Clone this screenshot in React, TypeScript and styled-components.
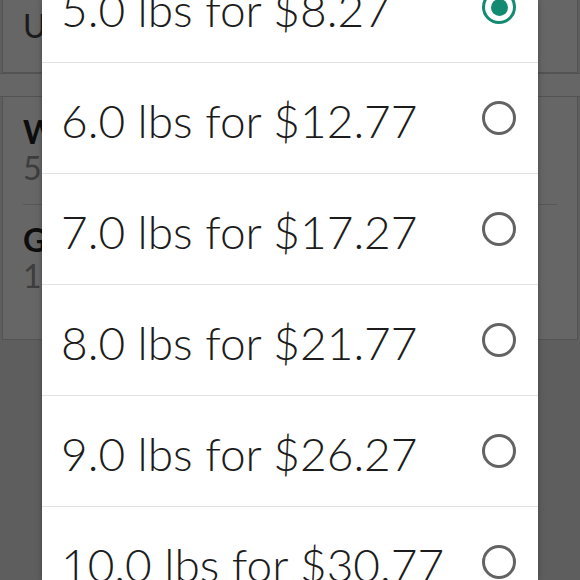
import React, { useState } from 'react';
import styled, { createGlobalStyle } from 'styled-components';

const GlobalStyle = createGlobalStyle`
  html, body {
    margin: 0;
    padding: 0;
    height: 100%;
    overflow: hidden;
    font-family: Lato, "Noto Sans", sans-serif;
  }
`;

const Screen = styled.div`
  position: relative;
  width: 580px;
  height: 580px;
  overflow: hidden;
  background: #ebebeb;
`;

const Page = styled.div`
  display: flex;
  flex-direction: column;
`;

const Card = styled.div<{ $height?: number }>`
  margin: 0 2px;
  background: #fff;
  border: 1px solid #cfcfcf;
  border-top: none;
  padding: 0 20px;
  ${p => (p.$height ? `height: ${p.$height}px; box-sizing: border-box;` : '')}
`;

const Band = styled.div`
  height: 22px;
  background: #fff;
  border-top: 1px solid #cfcfcf;
  border-bottom: 1px solid #cfcfcf;
`;

const TopLine = styled.div`
  padding-top: 8px;
  font-size: 32px;
  line-height: 36px;
  color: #444;
`;

const Field = styled.div<{ $last?: boolean }>`
  padding: 17px 0 18px;
  border-bottom: ${p => (p.$last ? 'none' : '1px solid #dcdcdc')};
`;

const FieldLabel = styled.div`
  font-size: 32px;
  line-height: 36px;
  font-weight: 700;
  color: #222;
`;

const FieldValue = styled.div`
  font-size: 32px;
  line-height: 36px;
  color: #9a9a9a;
`;

const Scrim = styled.div`
  position: absolute;
  inset: 0;
  background: rgba(0, 0, 0, 0.6);
`;

const Dialog = styled.div`
  position: absolute;
  top: 0;
  bottom: 0;
  left: 42px;
  width: 496px;
  background: #fff;
  overflow: hidden;
  box-shadow: 0 0 6px rgba(0, 0, 0, 0.3);
`;

const OptionList = styled.div`
  display: flex;
  flex-direction: column;
  margin-top: -48px;
`;

const Option = styled.label`
  display: flex;
  align-items: center;
  justify-content: space-between;
  height: 111px;
  padding: 4px 22px 0 19px;
  box-sizing: border-box;
  border-bottom: 1px solid #e2e2e2;
  cursor: pointer;
`;

const OptionText = styled.span`
  font-size: 46px;
  font-weight: 300;
  color: #1c1c1c;
`;

const Radio = styled.span<{ $checked: boolean }>`
  width: 34px;
  height: 34px;
  box-sizing: border-box;
  border-radius: 50%;
  border: 3px solid ${p => (p.$checked ? '#138a72' : '#636363')};
  display: flex;
  align-items: center;
  justify-content: center;
  margin-top: -4px;

  &::after {
    content: '';
    width: 17px;
    height: 17px;
    border-radius: 50%;
    background: #138a72;
    display: ${p => (p.$checked ? 'block' : 'none')};
  }
`;

const weights = [5, 6, 7, 8, 9, 10, 11];

const App: React.FC = () => {
  const [selected, setSelected] = useState(5);

  return (
    <Screen>
      <GlobalStyle />
      <Page>
        <Card $height={73}>
          <TopLine>Use standard shipping</TopLine>
        </Card>
        <Band />
        <Card $height={243}>
          <Field>
            <FieldLabel>Weight</FieldLabel>
            <FieldValue>5.0 lbs</FieldValue>
          </Field>
          <Field $last>
            <FieldLabel>Glass items</FieldLabel>
            <FieldValue>1</FieldValue>
          </Field>
        </Card>
      </Page>
      <Scrim />
      <Dialog>
        <OptionList>
          {weights.map(w => (
            <Option key={w} onClick={() => setSelected(w)}>
              <OptionText>
                {w.toFixed(1)} lbs for ${(8.27 + (w - 5) * 4.5).toFixed(2)}
              </OptionText>
              <Radio $checked={selected === w} />
            </Option>
          ))}
        </OptionList>
      </Dialog>
    </Screen>
  );
};

export default App;
